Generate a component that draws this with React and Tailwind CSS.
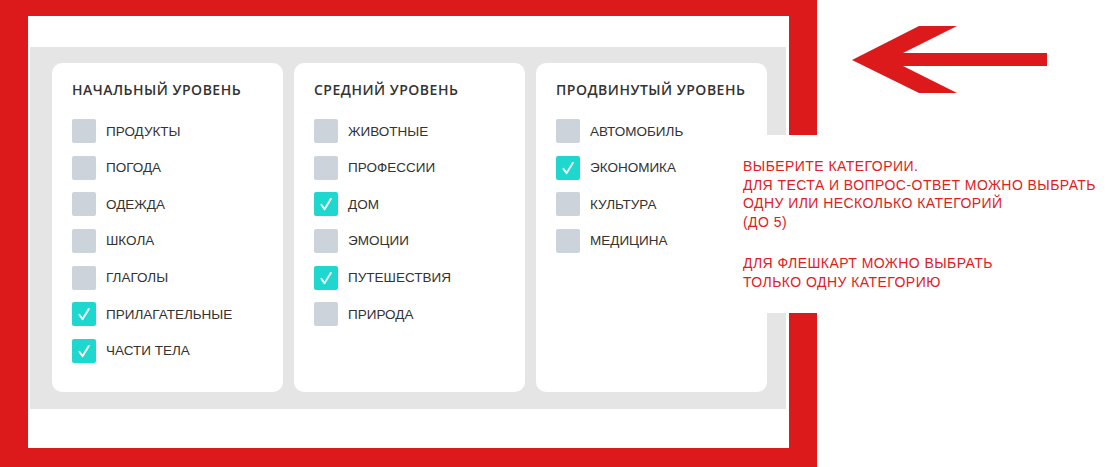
import React from "react";

const levels = [
  {
    title: "НАЧАЛЬНЫЙ УРОВЕНЬ",
    items: [
      ["ПРОДУКТЫ", false],
      ["ПОГОДА", false],
      ["ОДЕЖДА", false],
      ["ШКОЛА", false],
      ["ГЛАГОЛЫ", false],
      ["ПРИЛАГАТЕЛЬНЫЕ", true],
      ["ЧАСТИ ТЕЛА", true],
    ],
  },
  {
    title: "СРЕДНИЙ УРОВЕНЬ",
    items: [
      ["ЖИВОТНЫЕ", false],
      ["ПРОФЕССИИ", false],
      ["ДОМ", true],
      ["ЭМОЦИИ", false],
      ["ПУТЕШЕСТВИЯ", true],
      ["ПРИРОДА", false],
    ],
  },
  {
    title: "ПРОДВИНУТЫЙ УРОВЕНЬ",
    items: [
      ["АВТОМОБИЛЬ", false],
      ["ЭКОНОМИКА", true],
      ["КУЛЬТУРА", false],
      ["МЕДИЦИНА", false],
    ],
  },
];

function Box({ checked }) {
  if (!checked) {
    return <div className="w-[24px] h-[24px] rounded-[2px] bg-[#ccd3db] shrink-0" />;
  }
  return (
    <div className="w-[24px] h-[24px] rounded-[2px] bg-[#1ed8cf] shrink-0 flex items-center justify-center">
      <svg width="24" height="24" viewBox="0 0 24 24" fill="none">
        <path d="M7.4 12.8 L10.5 17.2 L16.8 6.9" stroke="white" strokeWidth="1.9" strokeLinecap="round" strokeLinejoin="round" />
      </svg>
    </div>
  );
}

function Card({ title, items }) {
  return (
    <div className="w-[231px] bg-white rounded-[10px] pt-[17px] pl-[20px]">
      <div className="text-[14px] leading-[20px] font-semibold text-[#333] tracking-[0.5px]" style={{ fontFamily: '"Open Sans", sans-serif' }}>
        {title}
      </div>
      <div className="mt-[19px] flex flex-col gap-[12.67px]">
        {items.map(([label, checked]) => (
          <div key={label} className="flex items-center h-[24px]">
            <Box checked={checked} />
            <span className="ml-[10px] mt-[1px] text-[13.5px] leading-[16px] text-[#333]" style={{ fontFamily: '"Liberation Sans", Arial, sans-serif' }}>
              {label}
            </span>
          </div>
        ))}
      </div>
    </div>
  );
}

export default function App() {
  return (
    <div className="relative w-[1114px] h-[467px] bg-white flex overflow-hidden">
      <div className="w-[817px] h-[467px] bg-[#dc1a1c] pt-[16px] pl-[28px] pr-[28px] pb-[19px] shrink-0">
        <div className="w-full h-full bg-white pt-[31px] pl-[2px] pr-[3px]">
          <div className="h-[362px] bg-[#e5e5e5] pt-[16px] pb-[17px] pl-[22px] flex gap-[11px]">
            {levels.map((l) => (
              <Card key={l.title} title={l.title} items={l.items} />
            ))}
          </div>
        </div>
      </div>
      <div className="pt-[26px] pl-[35px]">
        <svg width="196" height="68" viewBox="852 26 196 68">
          <polygon
            points="852,60 919,26 957,26 903,53 1047,53 1047,66 903,66 957,93 919,93"
            fill="#dc1a1c"
          />
        </svg>
      </div>
      <div
        className="absolute left-[728px] top-[135px] w-[386px] h-[178px] bg-white pl-[15px] pt-[22px] text-[14px] leading-[18.6px] tracking-[0.45px] text-[#e0201c]"
        style={{ fontFamily: '"Liberation Sans", Arial, sans-serif' }}
      >
        <div>ВЫБЕРИТЕ КАТЕГОРИИ.</div>
        <div>ДЛЯ ТЕСТА И ВОПРОС-ОТВЕТ МОЖНО ВЫБРАТЬ</div>
        <div>ОДНУ ИЛИ НЕСКОЛЬКО КАТЕГОРИЙ</div>
        <div>(ДО 5)</div>
        <div className="mt-[22.7px]">ДЛЯ ФЛЕШКАРТ МОЖНО ВЫБРАТЬ</div>
        <div>ТОЛЬКО ОДНУ КАТЕГОРИЮ</div>
      </div>
    </div>
  );
}
